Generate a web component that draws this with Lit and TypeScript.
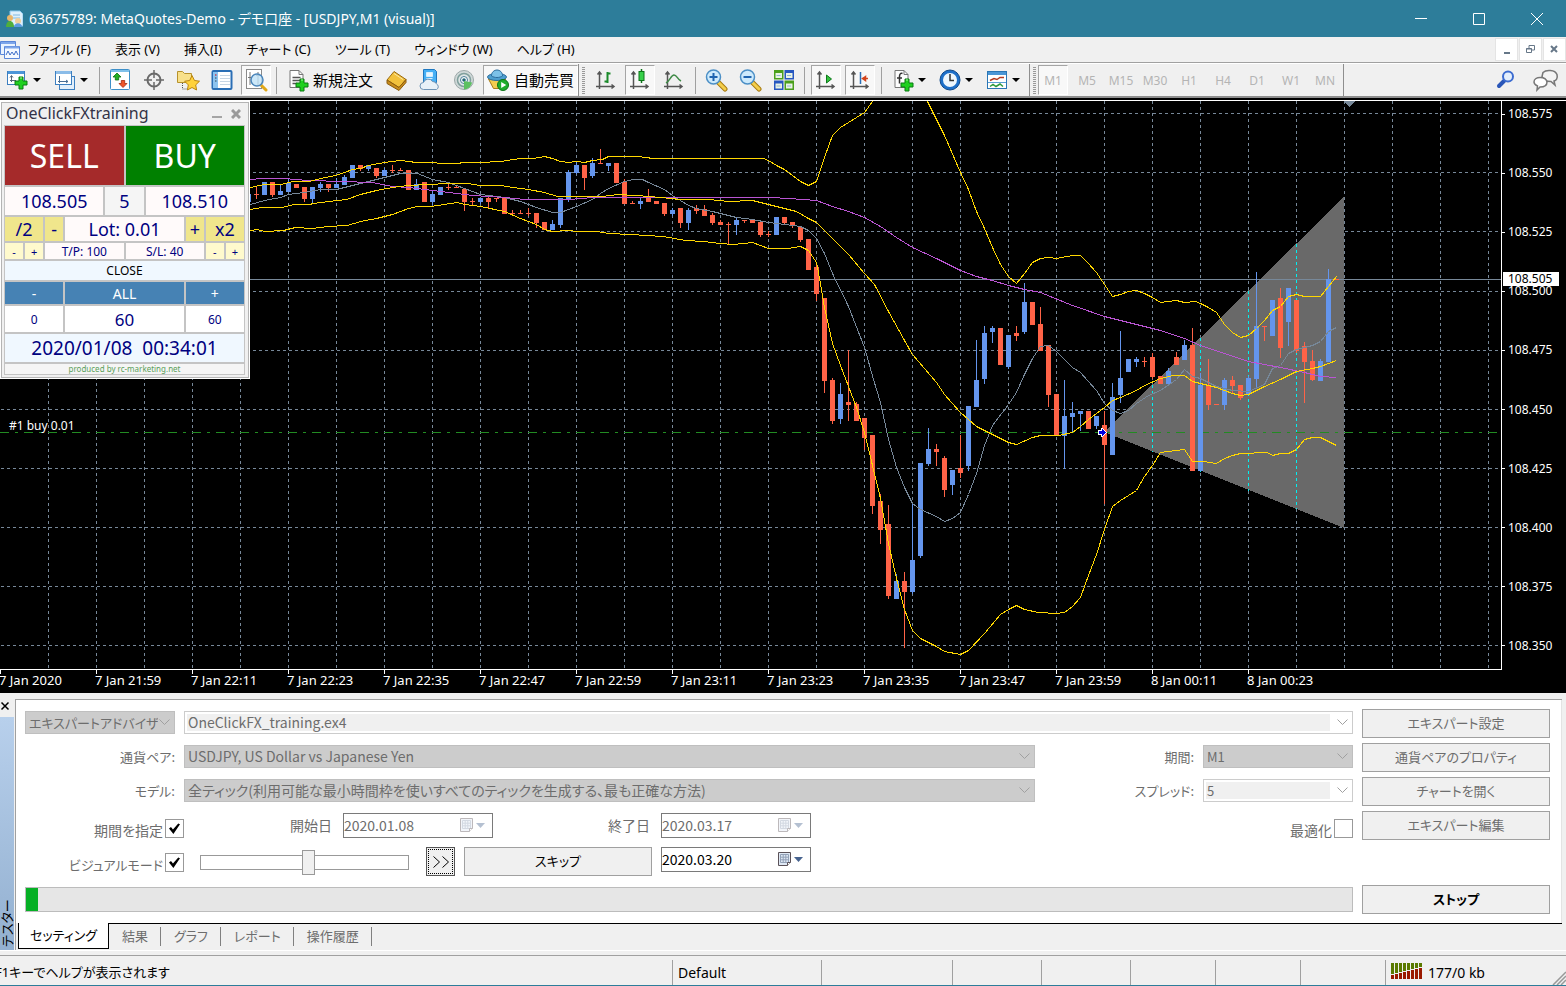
import { LitElement, html, svg, css, nothing } from "lit";
import { customElement } from "lit/decorators.js";
import { classMap } from "lit/directives/class-map.js";

type Candle = [x: number, up: 0 | 1, high: number, top: number, bottom: number, low: number];

const CANDLES: Candle[] = [
  [248, 1, 194, 194, 202, 202], [256, 0, 187, 194, 195, 199], [264, 1, 182, 182, 195, 195], [272, 0, 182, 182, 195, 197],
  [280, 1, 185, 191, 195, 195], [288, 1, 179, 183, 192, 192], [296, 0, 184, 184, 188, 188], [304, 0, 187, 187, 199, 202],
  [312, 1, 187, 187, 199, 203], [320, 1, 182, 184, 188, 192], [328, 0, 184, 184, 188, 192], [336, 1, 178, 184, 188, 188],
  [344, 1, 175, 177, 185, 185], [352, 1, 165, 165, 178, 178], [360, 0, 165, 165, 169, 171], [368, 1, 165, 165, 169, 171],
  [376, 0, 168, 168, 176, 178], [384, 1, 168, 170, 176, 176], [392, 0, 165, 170, 171, 173], [400, 0, 168, 170, 171, 171],
  [408, 0, 170, 170, 190, 190], [416, 1, 179, 184, 190, 190], [424, 0, 182, 182, 202, 202], [432, 1, 191, 194, 202, 205],
  [440, 1, 187, 187, 195, 195], [448, 0, 182, 187, 188, 190], [456, 0, 185, 187, 188, 188], [464, 0, 189, 189, 202, 211],
  [472, 0, 198, 201, 202, 206], [480, 1, 198, 198, 202, 204], [488, 0, 196, 198, 202, 208], [496, 0, 198, 198, 199, 202],
  [504, 0, 197, 197, 214, 214], [512, 0, 210, 213, 214, 216], [520, 0, 210, 213, 214, 214], [528, 0, 208, 213, 214, 216],
  [536, 0, 213, 213, 223, 228], [544, 0, 222, 222, 230, 230], [552, 1, 220, 224, 230, 230], [560, 1, 198, 198, 225, 228],
  [568, 1, 170, 172, 200, 202], [576, 1, 162, 165, 173, 174], [584, 0, 165, 165, 178, 190], [592, 1, 158, 163, 176, 178],
  [600, 0, 149, 163, 164, 164], [608, 1, 163, 163, 166, 171], [616, 0, 163, 163, 183, 183], [624, 0, 179, 182, 204, 204],
  [632, 0, 201, 203, 204, 204], [640, 1, 197, 201, 204, 209], [648, 0, 189, 198, 202, 202], [656, 0, 201, 201, 204, 204],
  [664, 0, 203, 203, 214, 216], [672, 1, 208, 210, 214, 216], [680, 0, 208, 208, 223, 228], [688, 1, 208, 210, 223, 230],
  [696, 0, 205, 208, 211, 214], [704, 0, 205, 209, 216, 216], [712, 0, 213, 215, 223, 225], [720, 0, 220, 222, 225, 225],
  [728, 0, 222, 224, 225, 244], [736, 1, 218, 220, 225, 235], [744, 0, 220, 220, 221, 223], [752, 0, 219, 219, 223, 223],
  [760, 0, 221, 222, 235, 237], [768, 0, 231, 234, 235, 237], [776, 1, 217, 217, 235, 235], [784, 0, 217, 217, 223, 225],
  [792, 0, 222, 222, 225, 228], [800, 0, 226, 227, 240, 242], [808, 0, 239, 239, 270, 270], [816, 0, 263, 267, 294, 301],
  [824, 0, 298, 298, 381, 393], [832, 0, 378, 380, 421, 424], [840, 1, 383, 394, 419, 424], [848, 0, 350, 402, 405, 421],
  [856, 0, 402, 404, 421, 421], [864, 0, 418, 418, 438, 450], [872, 0, 435, 435, 506, 514], [880, 0, 494, 501, 530, 544],
  [888, 0, 505, 524, 596, 599], [896, 1, 574, 581, 599, 599], [904, 0, 572, 581, 592, 648], [912, 1, 502, 560, 592, 594],
  [920, 1, 463, 463, 556, 558], [928, 1, 428, 449, 464, 466], [936, 0, 444, 449, 452, 466], [944, 0, 456, 458, 490, 497],
  [952, 1, 470, 470, 485, 495], [960, 0, 435, 468, 473, 478], [968, 1, 406, 406, 466, 471], [976, 1, 340, 380, 407, 407],
  [984, 1, 326, 333, 379, 384], [992, 1, 326, 328, 332, 343], [1000, 0, 328, 328, 365, 365], [1008, 1, 335, 335, 367, 369],
  [1016, 0, 326, 333, 336, 341], [1024, 1, 283, 302, 332, 334], [1032, 0, 302, 302, 325, 325], [1040, 0, 307, 324, 351, 351],
  [1048, 0, 345, 345, 395, 407], [1056, 0, 394, 394, 436, 436], [1064, 1, 380, 416, 436, 469], [1072, 1, 402, 413, 417, 432],
  [1080, 1, 411, 411, 414, 431], [1088, 0, 411, 411, 429, 429], [1096, 1, 416, 416, 426, 429], [1104, 0, 411, 425, 445, 504],
  [1112, 1, 383, 397, 455, 455], [1120, 1, 331, 378, 395, 403], [1128, 1, 359, 359, 372, 372], [1136, 1, 357, 359, 362, 367],
  [1144, 0, 357, 361, 362, 367], [1152, 0, 353, 357, 377, 379], [1160, 0, 376, 376, 384, 384], [1168, 1, 368, 371, 384, 384],
  [1176, 0, 352, 357, 365, 365], [1184, 1, 340, 345, 360, 360], [1192, 0, 328, 345, 471, 471], [1200, 1, 373, 385, 471, 471],
  [1208, 0, 359, 385, 405, 410], [1216, 0, 404, 404, 405, 405], [1224, 1, 378, 380, 405, 410], [1232, 0, 376, 380, 386, 394],
  [1240, 0, 385, 385, 398, 400], [1248, 1, 376, 378, 394, 394], [1256, 1, 272, 326, 379, 387], [1264, 0, 326, 326, 327, 341],
  [1272, 1, 300, 300, 336, 336], [1280, 0, 288, 298, 348, 358], [1288, 1, 288, 288, 322, 346], [1296, 0, 300, 300, 351, 353],
  [1304, 0, 342, 346, 362, 403], [1312, 0, 350, 361, 380, 381], [1320, 1, 359, 361, 381, 381], [1328, 1, 269, 279, 362, 362],
  [1336, 0, 279, 279, 280, 280],
];

const UPPER = "240,189 250,187 264,184 280,184 293,181 309,181 320,178 335,175 344,172 352,169 360,168 368,165 384,162 400,160 416,162 432,162 440,163 458,163 462,162 480,162 500,161 520,158 533,158 544,156 552,158 560,161 568,162 576,161 584,162 592,160 602,159 608,156 637,156 653,158 763,158 768,160 776,165 784,169 792,175 800,181 808,185 816,181 824,157 832,135 840,127 864,112 872,101 880,88 920,88 927,101 944,135 960,172 968,189 976,211 984,228 992,247 1000,264 1008,276 1016,283 1024,273 1032,262 1040,258 1048,257 1056,258 1072,255 1080,255 1088,263 1096,272 1104,284 1112,296 1120,294 1128,291 1136,290 1144,293 1152,297 1160,302 1176,300 1184,302 1195,301 1200,303 1208,307 1216,312 1224,324 1232,332 1240,337 1248,335 1256,328 1264,320 1272,310 1280,306 1288,296 1296,294 1304,296 1320,296 1328,286 1336,276";
const MIDDLE = "240,210 250,209 261,207 282,207 293,204 308,204 320,202 346,199 360,194 376,190 392,187 408,185 427,184 448,183 467,183 480,185 500,185 512,187 528,189 544,192 557,196 602,196 617,194 636,195 660,197 680,199 708,199 728,201 752,200 768,204 784,208 796,211 808,218 816,222 832,238 848,254 864,273 874,284 888,311 904,340 912,354 924,368 936,382 944,394 952,403 960,412 976,426 992,434 1008,442 1016,444 1032,437 1040,435 1058,435 1072,432 1080,426 1088,419 1104,407 1112,400 1120,397 1136,390 1144,385 1160,378 1173,375 1184,375 1192,381 1216,387 1232,393 1240,395 1248,394 1264,386 1280,379 1296,371 1312,368 1320,366 1336,360";
const LOWER = "240,230 250,230 257,229 264,231 283,230 295,227 312,228 327,226 347,225 360,221 376,218 392,214 408,208 417,206 430,206 457,202 464,204 480,206 504,211 520,218 536,224 544,229 552,231 568,230 576,231 597,231 608,233 630,234 663,236 685,240 703,241 720,243 733,244 752,242 768,248 787,248 800,246 808,250 816,262 820,283 824,307 832,343 840,365 856,407 864,432 872,465 880,498 888,543 896,578 904,609 912,630 920,638 936,646 944,651 960,654 968,650 984,633 1000,614 1008,609 1016,605 1024,609 1038,612 1056,613 1064,612 1072,606 1080,597 1088,575 1096,554 1104,529 1112,506 1120,500 1136,490 1144,476 1152,465 1160,452 1168,451 1184,449 1192,461 1203,461 1216,463 1224,458 1232,455 1240,453 1267,452 1272,455 1280,453 1288,453 1296,449 1304,439 1312,437 1320,437 1328,441 1336,445";
const FAST = "240,207 250,204 264,200 280,197 288,194 304,192 320,189 336,189 348,186 364,182 384,177 400,173 417,173 432,179 448,182 464,188 480,194 504,197 520,201 536,207 552,212 560,212 576,206 592,199 600,193 608,188 624,181 633,179 642,179 648,182 664,189 672,195 688,205 696,208 712,211 736,217 752,219 768,222 784,224 800,226 808,230 816,238 824,253 832,273 848,306 864,347 873,379 880,402 888,439 896,467 904,487 912,503 920,509 936,516 944,521 952,518 960,512 968,494 976,473 984,445 992,425 1008,404 1016,392 1024,374 1032,358 1040,346 1048,345 1056,351 1072,367 1080,372 1096,390 1104,403 1112,410 1120,413 1128,410 1136,403 1148,395 1160,390 1176,379 1184,369 1192,376 1200,378 1216,386 1232,390 1248,391 1264,384 1272,368 1280,365 1288,353 1296,349 1312,345 1320,341 1328,331 1336,327";
const SLOW = "240,179 250,179 261,178 285,178 293,179 310,180 340,181 372,182 392,186 408,187 432,190 448,192 472,195 504,197 525,199 568,199 593,197 772,197 803,199 816,200 832,206 848,211 864,217 880,226 896,237 912,247 936,258 960,270 976,276 992,280 1008,285 1024,289 1040,292 1072,305 1104,316 1136,324 1160,330 1184,338 1200,345 1224,353 1248,361 1280,367 1304,372 1320,376 1336,377";

const PRICES = ["108.575", "108.550", "108.525", "108.500", "108.475", "108.450", "108.425", "108.400", "108.375", "108.350"];
const TIMES = ["7 Jan 2020", "7 Jan 21:59", "7 Jan 22:11", "7 Jan 22:23", "7 Jan 22:35", "7 Jan 22:47", "7 Jan 22:59", "7 Jan 23:11", "7 Jan 23:23", "7 Jan 23:35", "7 Jan 23:47", "7 Jan 23:59", "8 Jan 00:11", "8 Jan 00:23"];
const GRID_Y = [113, 172, 231, 291, 350, 409, 468, 527, 586, 645];

const icon = (body: unknown, w = 24, h = 24) =>
  html`<svg width=${w} height=${h} viewBox="0 0 ${w} ${h}" aria-hidden="true">${body}</svg>`;

const axes = svg`<path d="M5.500 4v17M2 18.500h18M3.500 6.500l2-2.500 2 2.500M17.500 16.500l2.500 2-2.500 2" fill="none" stroke="#555" stroke-width="1.500"/>`;
const plus = (x: number, y: number) =>
  svg`<path d="M${x + 4} ${y}h4v4h4v4h-4v4h-4v-4h-4v-4h4z" fill="#1fd01f" stroke="#0a7a12"/><path d="M${x + 5} ${y + 1}h2" stroke="#a6f7a0"/>`;
const lens = (sign: string) => svg`<path d="M14 14l7 7" stroke="#a87b10" stroke-width="5" stroke-linecap="round"/><path d="M15 15l6 6" stroke="#f4ce4c" stroke-width="3" stroke-linecap="round"/>
  <circle cx="9.500" cy="9" r="7" fill="#cdeafc" stroke="#4b8fc6" stroke-width="1.500"/><path d=${sign} stroke="#1f64b0" stroke-width="2"/>`;
const doc = svg`<path d="M4 2.500h9l4 4v13h-13z" fill="#fdfdfd" stroke="#777"/><path d="M13 2.500v4h4" fill="none" stroke="#777"/>`;

const ICONS: Record<string, unknown> = {
  newChart: icon(svg`<rect x="1.500" y="3.500" width="17" height="13" fill="#fff" stroke="#3d7fc0"/><rect x="2" y="3" width="16" height="3" fill="#4c95d8"/><path d="M5.500 8v6M4 12.500h6M4 9.500l1.500-2 1.500 2" fill="none" stroke="#567"/> ${plus(9, 9)}`),
  profiles: icon(svg`<rect x="6.500" y="8.500" width="15" height="13" fill="#e3effa" stroke="#3d7fc0"/><rect x="2.500" y="3.500" width="16" height="13" fill="#fff" stroke="#3d7fc0"/><rect x="3" y="3" width="15" height="3" fill="#8bbce8"/><path d="M5 13.500h10M6.500 8v7M13 12l2 1.500-2 1.500" fill="none" stroke="#4a6e94"/>`),
  market: icon(svg`<rect x="2.500" y="1.500" width="19" height="20" rx="1" fill="#fff" stroke="#3d8fc8"/><path d="M3 3h18" stroke="#7fc0ea" stroke-width="2"/><path d="M9 5l4 4h-2.300v3h-3.400v-3h-2.300z" fill="#22b022" stroke="#0b7010" stroke-width=".8"/><path d="M15 19.500l-4-4h2.300v-3h3.400v3h2.300z" fill="#f0562a" stroke="#a32a0c" stroke-width=".8"/>`),
  cross: icon(svg`<circle cx="12" cy="12" r="6.500" fill="none" stroke="#6a6a6a" stroke-width="2"/><path d="M12 2v8M12 14v8M2 12h8M14 12h8" stroke="#6a6a6a" stroke-width="1.500"/>`),
  navigator: icon(svg`<path d="M1.500 3.500h5l2 2h7v9h-14z" fill="#f8e08a" stroke="#b7922c"/><path d="M6.500 15v6h6" fill="none" stroke="#555" stroke-dasharray="1 1"/><path d="M16 7.500l2.500 5 5 .7-3.800 3.700.9 5.100-4.600-2.500-4.600 2.500.9-5.100-3.700-3.700 5.100-.7z" fill="#ffd23c" stroke="#b98510"/>`),
  terminal: icon(svg`<rect x="2.500" y="3" width="19" height="18" rx="1" fill="#fff" stroke="#2a6eb5" stroke-width="2"/><rect x="3" y="4" width="5" height="16" fill="#8cc3ef"/><path d="M10 7.500h10M10 10.500h10M10 13.500h10M10 16.500h10" stroke="#c7d6e4"/><path d="M5 7h1.500" stroke="#d00"/><path d="M5 10h1.500M5 13h1.500" stroke="#345"/>`),
  tester: icon(svg`<rect x="2.500" y="1.500" width="15" height="19" fill="#fff" stroke="#8a8a8a"/><path d="M6 4v13M4 9.500h4M14 4v13M12 7.500h4" stroke="#777"/><path d="M17 17l5 5" stroke="#e0a818" stroke-width="3" stroke-linecap="round"/><circle cx="13" cy="12" r="6" fill="#bfe2f8cc" stroke="#4b86bb" stroke-width="1.500"/>`),
  order: icon(svg`${doc}<path d="M6.500 9.500h8M6.500 12.500h8M6.500 15.500h4" stroke="#555" stroke-width="1.500"/>${plus(10, 11)}`),
  book: icon(svg`<path d="M3 12l7-8.500 12 8-7 8z" fill="#f2c13c" stroke="#9a6a10"/><path d="M3 12v3.500l12 7 7-8v-3l-7 8z" fill="#c98d1c" stroke="#8a5b0c"/><path d="M10 5.500l9 6" stroke="#fbe6a0"/>`),
  vps: icon(svg`<path d="M5.500 1.500h11l2 2v11h-13z" fill="#46b0f5" stroke="#1f78c0"/><path d="M8.500 4.500h6v4h-6zM8.500 10.500h6" fill="#e8f6ff" stroke="#d4efff"/><path d="M5.500 21.500a3.500 3.500 0 0 1 0-7 5 5 0 0 1 9-1 4 4 0 0 1 4 2.500 3 3 0 0 1 0 5.500z" fill="#e8f1f8" stroke="#6e93b5"/>`),
  signal: icon(svg`<circle cx="12" cy="12" r="9.500" fill="#cfd8d8" stroke="#9ca8a8"/><circle cx="12" cy="12" r="6.500" fill="#dfe6e6" stroke="#7f9f9c" stroke-width="1.500"/><circle cx="12" cy="12" r="3.500" fill="#fff" stroke="#4a7f98"/><circle cx="12" cy="12" r="1.800" fill="#267"/><path d="M12 13v8.500c4 0 7-3 8-7z" fill="#5cc060"/>`),
  auto: icon(svg`<path d="M1.500 11h17l-5 9.500h-7z" fill="#f2cc50" stroke="#a67c1c"/><ellipse cx="10" cy="9" rx="9.500" ry="3.500" fill="#4e9fd0" stroke="#2b6c9c"/><path d="M4.500 8c0-8 11-8 11 0-3 2-8 2-11 0z" fill="#7cc1e8" stroke="#2b6c9c"/><circle cx="16" cy="17" r="5.500" fill="#1fae2c" stroke="#0c7418"/><path d="M14.200 14v6l5-3z" fill="#fff"/>`),
  bars: icon(svg`${axes}<path d="M13.500 4v11M13.500 5.500h3M10.500 13.500h3" stroke="#1a8a2a" stroke-width="2"/>`),
  candles: icon(svg`${axes}<path d="M13.500 1v14" stroke="#0c7418" stroke-width="1.500"/><rect x="11" y="3.500" width="5" height="9" fill="#37d04a" stroke="#0c7418"/>`),
  line: icon(svg`${axes}<path d="M4 15c4-2 5-8 8-8s3 4 7 6" fill="none" stroke="#3e8a46" stroke-width="1.500"/>`),
  zoomIn: icon(lens("M9.500 5v8M5.500 9h8")),
  zoomOut: icon(lens("M5.500 9h8")),
  tile: icon(svg`<rect x="2" y="2" width="9.500" height="9.500" fill="#4a9f1c"/><rect x="12.500" y="2" width="9.500" height="9.500" fill="#2657c0"/><rect x="2" y="12.500" width="9.500" height="9.500" fill="#2657c0"/><rect x="12.500" y="12.500" width="9.500" height="9.500" fill="#4a9f1c"/><path d="M3.500 5h6.500v5h-6.500zM14 5h6.500v5h-6.500zM3.500 15.500h6.500v5h-6.500zM14 15.500h6.500v5h-6.500z" fill="#e9f3e4"/><path d="M4.500 7.500h4M15 7.500h4M4.500 18h4M15 18h4" stroke="#8fb6d6"/>`),
  scroll: icon(svg`${axes}<path d="M12.500 7v8l5-4z" fill="#35c23f" stroke="#0c7a1a"/>`),
  shift: icon(svg`${axes}<path d="M12.500 4v12" stroke="#2a6eb5" stroke-width="1.500"/><path d="M20 10.500h-3M17.500 8.500l-3 2 3 2z" fill="#d2431c" stroke="#d2431c" stroke-width="1.500"/>`),
  indicator: icon(svg`${doc}<path d="M11.500 5.500c-2-1-3 1-3 3v7M6 10h5" fill="none" stroke="#333" stroke-width="1.500"/>${plus(10, 11)}`),
  period: icon(svg`<circle cx="12" cy="12" r="8.500" fill="#eef6fd" stroke="#1d6fc9" stroke-width="3"/><circle cx="12" cy="12" r="10" fill="none" stroke="#124a8c"/><path d="M12 6v6.500h4" fill="none" stroke="#333" stroke-width="1.500"/>`),
  template: icon(svg`<rect x="2.500" y="3.500" width="19" height="17" fill="#fff" stroke="#2a76b5"/><rect x="3" y="4" width="18" height="3" fill="#4a96d6"/><path d="M3 14.500h18" stroke="#5a9fd4"/><path d="M5 12.500l4-2 3 1 3-2h4" fill="none" stroke="#b23a20" stroke-width="1.500"/><path d="M5 18.500l3-2 3 2 4-2.500 3 2.500" fill="none" stroke="#2f9a3c" stroke-width="1.500"/>`),
  search: icon(svg`<path d="M10 13l-5 5" stroke="#2a56b8" stroke-width="4" stroke-linecap="round"/><circle cx="14" cy="8.500" r="5" fill="#e4effc" stroke="#3c6cd0" stroke-width="2"/>`),
  chat: icon(svg`<path d="M11 4.500c3-3 12-3 14 2 1 4-1 6-3 6.500l1 4-4-3.500c-4 0-8-1-9-5z" fill="#f4f4f4" stroke="#777" stroke-width="1.500"/><path d="M2 14c0-6 12-6 13 0 0 4-4 5-7 5l-3 3 .5-4c-2-1-3.500-2-3.500-4z" fill="#fff" stroke="#777" stroke-width="1.500"/>`, 28, 24),
};

@customElement("mt-toolbar")
export class MtToolbar extends LitElement {
  static styles = css`
    :host { display: flex; align-items: center; height: 35px; background: #f0f0f0; border-top: 1px solid #fff; border-bottom: 2px solid #8e8e8e; }
    svg { display: block; flex: none; }
    button { font: inherit; color: #000; background: none; border: 1px solid transparent; padding: 0; margin: 0; height: 30px; width: 30px; display: flex; align-items: center; justify-content: center; flex: none; }
    .group { display: flex; align-items: center; gap: 4px; padding: 0 5px; }
    .drop { width: 43px; justify-content: flex-start; gap: 3px; padding-left: 3px; }
    .drop::after { content: ""; border: 4px solid transparent; border-top-color: #000; border-bottom: 0; }
    .wide { width: auto; gap: 3px; padding: 0 3px; white-space: nowrap; font-size: 15px; }
    .wide span { padding-bottom: 2px; }
    .on { background: #f8f8f8; border-color: #a5a5a5 #fff #fff #a5a5a5; }
    .sep { width: 1px; height: 27px; background: #a0a0a0; flex: none; }
    .edge { width: 1px; height: 32px; background: #8e8e8e; flex: none; }
    .grip { width: 3px; height: 27px; margin-left: 3px; flex: none; background: repeating-linear-gradient(#999 0 1px, #f0f0f0 1px 2px); }
    .frames { color: #b4b4b4; font-size: 12px; padding: 0 3px 0 2px; }
    .frames button { color: inherit; }
    .spring { flex: 1; }
    .tail { gap: 10px; }
    .lead { padding: 0 7px 0 2px; }
    .trade { padding-right: 0; }
    .shifts { padding: 0 6px; }
  `;
  private tool(name: string, label: string, kind = "", text = "") {
    const on = kind.includes("on");
    return html`<button class=${classMap({ on, drop: kind.includes("drop"), wide: kind.includes("wide") })} aria-label=${label}>${ICONS[name]}${text ? html`<span>${text}</span>` : nothing}</button>`;
  }
  render() {
    return html`
      <div class="group lead">${this.tool("newChart", "新規チャート", "drop")}${this.tool("profiles", "表示", "drop")}</div><i class="sep"></i>
      <div class="group">${this.tool("market", "気配値")}${this.tool("cross", "データ")}${this.tool("navigator", "ナビゲーター")}${this.tool("terminal", "ターミナル")}${this.tool("tester", "テスター", "on")}</div><i class="sep"></i>
      <div class="group trade">${this.tool("order", "新規注文", "wide", "新規注文")}${this.tool("book", "エディター")}${this.tool("vps", "VPS")}${this.tool("signal", "シグナル")}${this.tool("auto", "自動売買", "wide on", "自動売買")}</div>
      <i class="edge"></i><i class="grip"></i>
      <div class="group shifts">${this.tool("bars", "バー")}${this.tool("candles", "ローソク足", "on")}${this.tool("line", "ライン")}</div><i class="sep"></i>
      <div class="group">${this.tool("zoomIn", "拡大")}${this.tool("zoomOut", "縮小")}${this.tool("tile", "整列")}</div><i class="sep"></i>
      <div class="group shifts">${this.tool("scroll", "自動スクロール", "on")}${this.tool("shift", "チャートシフト", "on")}</div><i class="sep"></i>
      <div class="group">${this.tool("indicator", "インディケータ", "drop")}${this.tool("period", "期間", "drop")}${this.tool("template", "定型", "drop")}</div>
      <i class="edge"></i><i class="grip"></i>
      <div class="group frames">${["M1", "M5", "M15", "M30", "H1", "H4", "D1", "W1", "MN"].map((t, i) => html`<button class=${i ? "" : "on"} disabled>${t}</button>`)}</div><i class="edge"></i>
      <div class="spring"></div>
      <div class="group tail">${this.tool("search", "検索")}${this.tool("chat", "チャット")}</div>`;
  }
}

@customElement("trade-panel")
export class TradePanel extends LitElement {
  static styles = css`
    :host { display: block; box-sizing: border-box; width: 250px; padding: 2px 1px 1px; background: #fff; }
    .frame { background: #f0f0f0; border: 1px solid #b4b4b4; padding: 0 3px 2px 2px; }
    header { display: flex; align-items: center; height: 22px; font-size: 16px; line-height: 20px; color: #333347; padding-left: 2px; }
    header span { flex: 1; padding-bottom: 2px; }
    header button { width: 19px; padding: 0; border: 0; background: none; }
    header svg { display: block; margin: auto; }
    .cells { display: grid; grid-template-columns: repeat(12, 1fr); gap: 2px; padding: 1px; background: #c4c4c4; }
    .cells > * { font: inherit; border: 0; padding: 0; margin: 0; color: #000080; background: #fffafa; display: flex; align-items: center; justify-content: center; white-space: pre; min-width: 0; }
    .cells > .sell, .cells > .buy { height: 59px; font-size: 32px; color: #fff; }
    .cells > .sell { background: #a52a2a; }
    .cells > .buy { background: #008000; }
    .cells > .big { height: 28px; font-size: 18px; }
    .cells > .lot { height: 24px; font-size: 18px; }
    .cells > .small { height: 16px; font-size: 12px; }
    .cells > .soft { background: #f5f5f5; }
    .cells > .khaki { background: #f0e68c; }
    .cells > .lemon { background: #fffacd; font-size: 11px; }
    .cells > .alice { background: #f0f8ff; }
    .cells > .clock { font-size: 19px; }
    .cells > .close { height: 19px; font-size: 12px; color: #000; }
    .cells > .steel { height: 22px; font-size: 14px; background: #4682b4; color: #fff; }
    .cells > .count { height: 26px; font-size: 12px; background: #fff; }
    .cells > .mid { font-size: 17px; }
    .cells > .credit { height: 10px; font-size: 8px; line-height: 10px; color: #5a9f5a; background: #f5f5f5; }
    .c1 { grid-column: span 1; } .c2 { grid-column: span 2; } .c3 { grid-column: span 3; } .c4 { grid-column: span 4; }
    .c5 { grid-column: span 5; } .c6 { grid-column: span 6; } .c12 { grid-column: span 12; }
  `;
  render() {
    return html`<div class="frame">
      <header><span>OneClickFXtraining</span>
        <button aria-label="最小化"><svg width="10" height="10"><path d="M0 8h10" stroke="#a5a5a5" stroke-width="2"/></svg></button>
        <button aria-label="閉じる"><svg width="10" height="10"><path d="M1 1l8 8M9 1l-8 8" stroke="#9a9a9a" stroke-width="3"/></svg></button></header>
      <div class="cells">
        <button class="c6 sell">SELL</button><button class="c6 buy">BUY</button>
        <div class="c5 big">108.505</div><div class="c2 big soft">5</div><div class="c5 big">108.510</div>
        <button class="c2 lot khaki">/2</button><button class="c1 lot khaki">-</button><div class="c6 lot">Lot: 0.01</div><button class="c1 lot khaki">+</button><button class="c2 lot khaki">x2</button>
        <button class="c1 small lemon">-</button><button class="c1 small lemon">+</button><div class="c4 small">T/P: 100</div><div class="c4 small">S/L: 40</div><button class="c1 small lemon">-</button><button class="c1 small lemon">+</button>
        <button class="c12 close alice">CLOSE</button>
        <button class="c3 steel">-</button><button class="c6 steel">ALL</button><button class="c3 steel">+</button>
        <div class="c3 count">0</div><div class="c6 count mid">60</div><div class="c3 count">60</div>
        <div class="c12 big alice clock">2020/01/08  00:34:01</div>
        <div class="c12 credit">produced by rc-marketing.net</div>
      </div></div>`;
  }
}

@customElement("price-chart")
export class PriceChart extends LitElement {
  static styles = css`
    :host { display: flex; flex-direction: column; position: relative; background: #000; color: #fff; font-size: 12px; padding-top: 2px; overflow: hidden; }
    .upper { flex: 1; display: flex; min-height: 0; border-top: 1px solid #fff; }
    .plot { flex: 1; min-width: 0; border-right: 1px solid #fff; border-bottom: 1px solid #fff; position: relative; }
    .plot svg { position: absolute; inset: 0; width: 100%; height: 100%; display: block; shape-rendering: crispEdges; }
    text { fill: #fff; font-size: 12px; }
    .scale { width: 64px; flex: none; display: flex; flex-direction: column; justify-content: space-between; box-sizing: border-box; padding: 6px 0 17px; position: relative; }
    .scale div { height: 14px; line-height: 14px; display: flex; align-items: center; gap: 3px; }
    .scale div::before { content: ""; width: 3px; height: 1px; background: #fff; }
    .scale output { position: absolute; left: 1px; top: 171px; width: 56px; height: 14px; line-height: 14px; background: #fff; color: #000; box-sizing: border-box; padding-left: 5px; }
    .times { display: flex; height: 23px; flex: none; font-size: 13px; }
    .times div { width: 96px; flex: none; line-height: 20px; white-space: nowrap; text-indent: -1px; position: relative; }
    .times div::before { content: ""; position: absolute; left: 0; top: 0; width: 1px; height: 4px; background: #fff; }
    trade-panel { position: absolute; left: 0; top: 2px; }
  `;
  private line(points: string, color: string) {
    return svg`<polyline points=${points} transform="translate(0.5 0.5)" fill="none" stroke=${color}/>`;
  }
  render() {
    const cols = Array.from({ length: 60 }, (_, i) => (i + 1) * 48);
    const guides = [[1152, 385, 452], [1200, 338, 472], [1248, 291, 491], [1296, 244, 509]];
    return html`
      <div class="upper"><div class="plot">
        <svg role="img" aria-label="USDJPY M1"><g transform="translate(0 -101)">
          ${GRID_Y.map((y) => svg`<line x1="1" x2="100%" y1=${y + 0.5} y2=${y + 0.5} stroke="#778899" stroke-dasharray="3 3"/>`)}
          ${cols.map((x) => svg`<line x1=${x + 0.5} x2=${x + 0.5} y1="101" y2="669" stroke="#778899" stroke-dasharray="3 3"/>`)}
          <path d="M1104 432L1344 197V528Z" fill="#696969"/>
          ${guides.map(([x, a, b]) => svg`<line x1=${x + 0.5} x2=${x + 0.5} y1=${a} y2=${b} stroke="#00f0f0" stroke-dasharray="3 3"/>`)}
          <line x1="0" x2="100%" y1="279.5" y2="279.5" stroke="#778899"/>
          <line x1="0" x2="100%" y1="432.5" y2="432.5" stroke="#228b22" stroke-dasharray="9 6 3 6"/>
          ${CANDLES.map(([x, up, high, top, bottom, low]) => svg`<path fill=${up ? "#6495ed" : "#ff6347"} d="M${x} ${high}h1V${low}h-1zM${x - 2} ${top}h5V${bottom}h-5z"/>`)}
          ${this.line(FAST, "#778899")}${this.line(SLOW, "#ba55d3")}
          ${this.line(UPPER, "#ffd700")}${this.line(MIDDLE, "#ffd700")}${this.line(LOWER, "#ffd700")}
          <path d="M1098.500 430.500h3v-2h1l4 4-4 4h-1v-2h-3z" fill="#0000e0" stroke="#fff"/>
          <path d="M1343 101h12l-6 6z" fill="#778899"/>
          <text x="9" y="430">#1 buy 0.01</text>
        </g></svg></div>
        <div class="scale">${PRICES.map((p) => html`<div>${p}</div>`)}<output>108.505</output></div>
      </div>
      <div class="times">${TIMES.map((t) => html`<div>${t}</div>`)}</div>
      <trade-panel></trade-panel>`;
  }
}

const chevron = html`<svg class="chev" width="11" height="7" viewBox="0 0 11 7" aria-hidden="true"><path d="M.5 .5l5 5 5-5" fill="none" stroke="#a0a0a0"/></svg>`;

@customElement("strategy-tester")
export class StrategyTester extends LitElement {
  static styles = css`
    :host { display: grid; grid-template-columns: 15px 1fr; background: #f0f0f0; padding-top: 6px; border-bottom: 1px solid #fff; font-family: "Noto Sans CJK JP", sans-serif; font-size: 14px; font-feature-settings: "palt"; color: #6d6d6d; }
    * { box-sizing: border-box; }
    button, input, select { font: inherit; font-feature-settings: inherit; color: inherit; margin: 0; border-radius: 0; opacity: 1; }
    .rail { display: flex; flex-direction: column; }
    .rail button { height: 18px; padding: 0 0 4px; border: 0; background: none; }
    .rail svg { display: block; }
    .rail div { flex: 1; margin: 0 1px 0 0; background: linear-gradient(#93b0d0, #b8d0ec); color: #000; font-size: 13px; line-height: 14px; writing-mode: vertical-rl; text-orientation: sideways; transform: rotate(180deg); padding-top: 3px; }
    .main { margin-right: 4px; border-left: 1px solid #a0a0a0; border-top: 1px solid #a0a0a0; min-width: 0; }
    .form { display: flex; gap: 9px; background: #fff; padding: 9px 11px 9px 9px; border-right: 1px solid #e3e3e3; }
    .left { flex: 1; min-width: 0; padding: 2px 0; }
    .row { display: flex; gap: 9px; height: 34px; align-items: flex-start; }
    .lab { width: 150px; flex: none; text-align: right; line-height: 24px; white-space: nowrap; font-size: 13px; }
    .pick { position: relative; display: block; flex: 1; min-width: 0; height: 23px; }
    .pick select { appearance: none; display: block; width: 100%; height: 23px; line-height: 21px; padding: 0 3px; background: #ccc; border: 1px solid #bfbfbf; }
    .pick .chev { position: absolute; right: 5px; top: 8px; }
    .pick.open select { border-color: #ccc; background: linear-gradient(to right, #f0f0f0 calc(100% - 22px), #fff 0); box-shadow: inset 0 0 0 2px #fff; }
    .fix { flex: none; width: 150px; }
    .fix select { padding-right: 16px; font-size: 13px; }
    .check { width: 159px; flex: none; display: flex; justify-content: flex-end; gap: 2px; padding-top: 6px; line-height: 23px; white-space: nowrap; }
    .check input { appearance: none; width: 19px; height: 19px; border: 1px solid #999; background: #fff; flex: none; display: block; }
    .check input:checked::before { content: ""; display: block; width: 11px; height: 11px; margin: 3px; background: #000; clip-path: polygon(0 50%, 18% 36%, 36% 60%, 84% 4%, 100% 12%, 40% 100%); }
    .kana { font-size: 13px; }
    .date { position: relative; width: 150px; height: 25px; flex: none; display: block; }
    .date input { width: 100%; height: 25px; border: 1px solid #7a7a7a; background: #fff; padding: 0 0 2px; display: block; }
    .date svg { position: absolute; right: 6px; top: 4px; opacity: .4; }
    .date.live { color: #000; }
    .date.live svg { opacity: 1; }
    .day { font-size: 14px; padding-right: 2px; }
    .when { width: 141px; }
    .slot { width: 209px; margin: 3px 8px 0 7px; height: 25px; appearance: none; background: none; flex: none; display: block; padding: 0; }
    .slot::-webkit-slider-runnable-track { height: 15px; border: 1px solid #999; background: #fff; box-sizing: border-box; }
    .slot::-webkit-slider-thumb { appearance: none; box-sizing: border-box; width: 13px; height: 25px; margin-top: -6px; border: 1px solid #999; background: #f0f0f0; }
    .btn { height: 29px; border: 1px solid #a0a0a0; background: #f0f0f0; padding: 0 0 2px; font-size: 13px; }
    .fast { width: 29px; flex: none; color: #000; border-color: #555; outline: 1px dotted #000; outline-offset: -3px; display: flex; align-items: center; justify-content: center; padding: 0; }
    .skip { width: 188px; flex: none; color: #000; }
    progress { appearance: none; display: block; width: 100%; height: 25px; margin-top: 6px; border: 1px solid #bcbcbc; background: #e6e6e6; }
    progress::-webkit-progress-bar { background: #e6e6e6; }
    progress::-webkit-progress-value { background: #06b025; }
    .actions { width: 188px; flex: none; display: flex; flex-direction: column; gap: 5px; }
    .stop { margin-top: auto; color: #000; font-weight: 700; }
    .tabs { display: flex; height: 27px; border-top: 1px solid #000; margin-left: 2px; align-items: flex-start; font-size: 13px; }
    .tabs button { height: 25px; line-height: 21px; padding: 0 13px 2px; border: 0; background: none; position: relative; white-space: nowrap; }
    .tabs button + button::after { content: ""; position: absolute; right: 0; top: 3px; width: 1px; height: 19px; background: #808080; }
    .tabs .cur { background: #fff; color: #000; margin-top: -1px; height: 26px; border: 1px solid #000; border-top: 0; padding: 0 11px 2px; }
    .push { flex: 1; }
  `;
  private calendar = html`<svg width="28" height="17" viewBox="0 0 28 17" aria-hidden="true"><path d="M1.500 1.500h12v10l-3 3h-9z" fill="#dfe8f4" stroke="#5b5258"/><path d="M3.500 3.500h8v8h-8zM3.500 6.200h8M3.500 8.800h8M6.200 3.500v8M8.800 3.500v8" fill="none" stroke="#93a2b8"/><path d="M10.500 14.500v-3h3" fill="#fff" stroke="#5b5258"/><path d="M17 6h9l-4.500 5z" fill="#47638f"/></svg>`;
  private pick(id: string, value: string, cls = "") {
    return html`<span class="pick ${cls}"><select id=${id} aria-label=${value} disabled><option>${value}</option></select>${chevron}</span>`;
  }
  private date(id: string, value: string, live = false) {
    return html`<span class="date ${live ? "live" : ""}"><input id=${id} aria-label=${value} .value=${value} ?disabled=${!live} />${this.calendar}</span>`;
  }
  render() {
    return html`
      <div class="rail"><button aria-label="閉じる"><svg width="10" height="14"><path d="M1.500 3.500l7 7M8.500 3.500l-7 7" stroke="#000" stroke-width="1.500"/></svg></button><div>テスター</div></div>
      <div class="main">
        <div class="form">
          <div class="left">
            <div class="row">${this.pick("kind", "エキスパートアドバイザ", "fix")}${this.pick("expert", "OneClickFX_training.ex4", "open")}</div>
            <div class="row"><label class="lab" for="pair">通貨ペア:</label>${this.pick("pair", "USDJPY, US Dollar vs Japanese Yen")}<label class="lab" for="frame">期間:</label>${this.pick("frame", "M1", "fix")}</div>
            <div class="row"><label class="lab" for="model">モデル:</label>${this.pick("model", "全ティック(利用可能な最小時間枠を使いすべてのティックを生成する、最も正確な方法)")}<label class="lab" for="spread">スプレッド:</label>${this.pick("spread", "5", "fix open")}</div>
            <div class="row">
              <label class="check">期間を指定<input type="checkbox" checked /></label>
              <label class="lab day when" for="from">開始日</label>${this.date("from", "2020.01.08")}
              <label class="lab day" for="to">終了日</label>${this.date("to", "2020.03.17")}
              <span class="push"></span>
              <label class="check">最適化<input type="checkbox" /></label>
            </div>
            <div class="row">
              <label class="check kana">ビジュアルモード<input type="checkbox" checked /></label>
              <input class="slot" type="range" min="0" max="100" value="52" aria-label="速度" />
              <button class="btn fast" aria-label="早送り"><svg width="18" height="14"><path d="M1.500 1.500l6 5.500-6 5.500M10.500 1.500l6 5.500-6 5.500" fill="none" stroke="#000"/></svg></button>
              <button class="btn skip">スキップ</button>
              ${this.date("skip", "2020.03.20", true)}
            </div>
            <progress max="100" value="0.9" aria-label="進捗"></progress>
          </div>
          <div class="actions">
            <button class="btn" disabled>エキスパート設定</button><button class="btn" disabled>通貨ペアのプロパティ</button>
            <button class="btn" disabled>チャートを開く</button><button class="btn" disabled>エキスパート編集</button>
            <button class="btn stop">ストップ</button>
          </div>
        </div>
        <div class="tabs" role="tablist">${["セッティング", "結果", "グラフ", "レポート", "操作履歴"].map((t, i) => html`<button role="tab" class=${i ? "" : "cur"}>${t}</button>`)}</div>
      </div>`;
  }
}

@customElement("app-root")
export class AppRoot extends LitElement {
  static styles = css`
    :host { display: flex; flex-direction: column; min-height: 100vh; box-sizing: border-box; overflow: hidden; background: #f0f0f0; border-bottom: 1px solid #2d7d9a; font: 14px "Noto Sans", "Noto Sans CJK JP", sans-serif; font-feature-settings: "palt"; color: #000; }
    * { box-sizing: border-box; }
    button { font: inherit; font-feature-settings: inherit; color: inherit; border: 0; background: none; padding: 0; }
    .title { display: flex; align-items: center; height: 37px; background: #2d7d9a; color: #fff; font-size: 14px; padding-left: 5px; }
    .title span { flex: 1; white-space: nowrap; padding: 0 0 2px 6px; }
    .title button { width: 58px; height: 37px; display: grid; place-items: center; }
    .menu { display: flex; align-items: center; height: 26px; border-bottom: 1px solid #a0a0a0; }
    .menu nav { flex: 1; display: flex; gap: 24px; margin-left: 8px; font-size: 13px; padding-bottom: 2px; }
    .menu nav button { white-space: nowrap; }
    .mdi { display: flex; gap: 1px; }
    .mdi button { width: 23px; height: 23px; background: #fff; border: 1px solid #e4e4e4; display: grid; place-items: center; }
    price-chart { flex: 1; min-height: 590px; }
    .status { display: flex; height: 30px; margin-top: 4px; border-top: 1px solid #a0a0a0; padding-top: 4px; line-height: 25px; white-space: nowrap; }
    .status div { border-left: 1px solid #a0a0a0; padding-left: 5px; height: 25px; flex: none; }
    .status .help { flex: 1; border: 0; padding: 0; text-indent: -5px; overflow: hidden; font-size: 13px; }
    .w1 { width: 149px; } .w2 { width: 131px; } .w3 { width: 89px; } .w4 { width: 85px; }
    .status .net { width: 181px; display: flex; gap: 5px; align-items: flex-start; }
    .grow { flex: 1; }
    .size { align-self: flex-end; display: block; }
  `;
  render() {
    return html`
      <header class="title">
        ${icon(svg`<path d="M5 2h10l3 3v12h-13z" fill="#dff0fb" stroke="#8cc8ee"/><path d="M8 6h7M8 9h7" stroke="#7fb8e0"/><circle cx="5" cy="9" r="3" fill="#e9b66a"/><path d="M1 18c0-8 8-8 8 0z" fill="#4fae3c"/><circle cx="13" cy="12" r="3" fill="#f0cf9a"/><path d="M9 18c0-5 8-5 8 0z" fill="#5b9be0"/>`, 18, 19)}
        <span>63675789: MetaQuotes-Demo - デモ口座 - [USDJPY,M1 (visual)]</span>
        <button aria-label="最小化"><svg width="12" height="12"><path d="M0 5.500h12" stroke="#fff"/></svg></button>
        <button aria-label="最大化"><svg width="12" height="12"><path d="M.5.5h11v11h-11z" fill="none" stroke="#fff"/></svg></button>
        <button aria-label="閉じる"><svg width="12" height="12"><path d="M0 0l12 12M12 0l-12 12" stroke="#fff"/></svg></button>
      </header>
      <div class="menu">
        ${icon(svg`<path d="M.5 2.500h15v13h-15z" fill="#eaf3ff" stroke="#5a86d8"/><path d="M4.500 7.500h15v12h-15z" fill="#f5f9ff" stroke="#5a86d8"/><path d="M5 8.500h14M1 4h14" stroke="#7ea6ea" stroke-width="2"/><path d="M6 16l2-4 2 4 2-3 2 3 2-4 2 4" fill="none" stroke="#3f6fc8"/>`, 20, 22)}
        <nav>${["ファイル (F)", "表示 (V)", "挿入(I)", "チャート (C)", "ツール (T)", "ウィンドウ (W)", "ヘルプ (H)"].map((m) => html`<button>${m}</button>`)}</nav>
        <div class="mdi">
          <button aria-label="最小化"><svg width="11" height="11"><path d="M3 9h6" stroke="#667788" stroke-width="2"/></svg></button>
          <button aria-label="元に戻す"><svg width="11" height="11"><path d="M4 4V1.500h5.500V6H7M1.500 4.500h5v4h-5zM1 5h6" fill="none" stroke="#667788"/></svg></button>
          <button aria-label="閉じる"><svg width="11" height="11"><path d="M2 2l6 6M8 2l-6 6" stroke="#667788" stroke-width="2"/></svg></button>
        </div>
      </div>
      <mt-toolbar></mt-toolbar>
      <price-chart></price-chart>
      <strategy-tester></strategy-tester>
      <footer class="status">
        <div class="help">F1キーでヘルプが表示されます</div><div class="w1">Default</div><div class="w2"></div><div class="w3"></div><div class="w3"></div><div class="w4"></div><div class="w4"></div><div class="w4"></div>
        <div class="net">${icon(Array.from({ length: 8 }, (_, i) => svg`<path d="M${i * 4} 3h3v${11 - i}h-3z" fill="#5a7a00"/><path d="M${i * 4} ${15 - i}h3V19h-3z" fill="#9a1a00"/>`), 32, 20)}<span>177/0 kb</span><span class="grow"></span>
          <svg class="size" width="14" height="14"><path d="M1 14L14 1M5 14l9-9M9 14l5-5" stroke="#999" stroke-width="1.500"/></svg></div>
      </footer>`;
  }
}
